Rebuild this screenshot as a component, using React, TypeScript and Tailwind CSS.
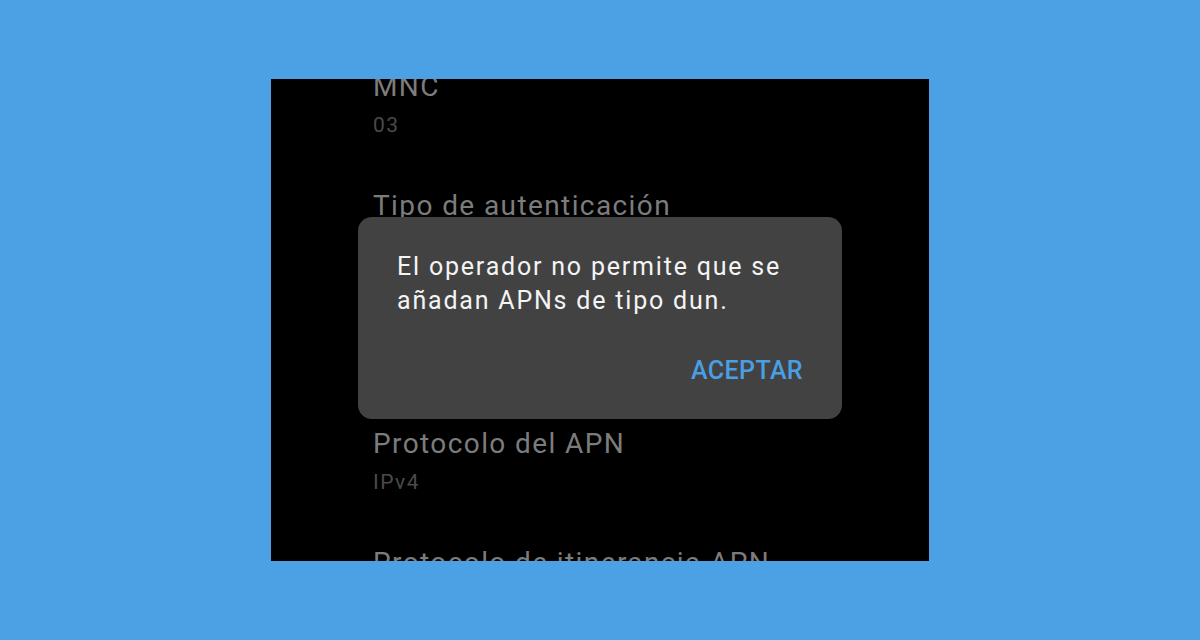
const items = [
  { title: "MNC", value: "03" },
  { title: "Tipo de autenticación", value: "Ninguno" },
  { title: "Tipo de APN", value: "default,supl" },
  { title: "Protocolo del APN", value: "IPv4" },
  { title: "Protocolo de itinerancia APN", value: "IPv4" },
];

export default function App() {
  return (
    <div
      className="w-[1200px] h-[640px] bg-[#4ca1e4] pt-[79px]"
      style={{ fontFamily: "Roboto, 'Noto Sans', sans-serif" }}
    >
      <div className="relative ml-[271px] w-[658px] h-[482px] bg-black overflow-hidden">
        <div className="mt-[-34px] pl-[102px]">
          {items.map((item) => (
            <div key={item.title} className="h-[119px] pt-[24px]">
              <div className="text-[28px] leading-[36px] tracking-[1.4px] text-[#7c7c7c]">{item.title}</div>
              <div className="mt-[6px] text-[21px] leading-[28px] tracking-[1.5px] text-[#4a4a4a]">{item.value}</div>
            </div>
          ))}
        </div>

        {/* dialog */}
        <div className="absolute left-[87px] top-[138px] w-[484px] rounded-[14px] bg-[#424242] pt-[33px] pb-[32px] px-[39px]">
          <p className="text-[25px] leading-[34px] tracking-[1.8px] text-[#f4f4f4]">
            El operador no permite que se añadan APNs de tipo dun.
          </p>
          <div className="mt-[37px] flex justify-end">
            <button className="text-[25px] leading-[32px] font-medium tracking-[0.4px] text-[#4a9ee2]">ACEPTAR</button>
          </div>
        </div>
      </div>
    </div>
  );
}
